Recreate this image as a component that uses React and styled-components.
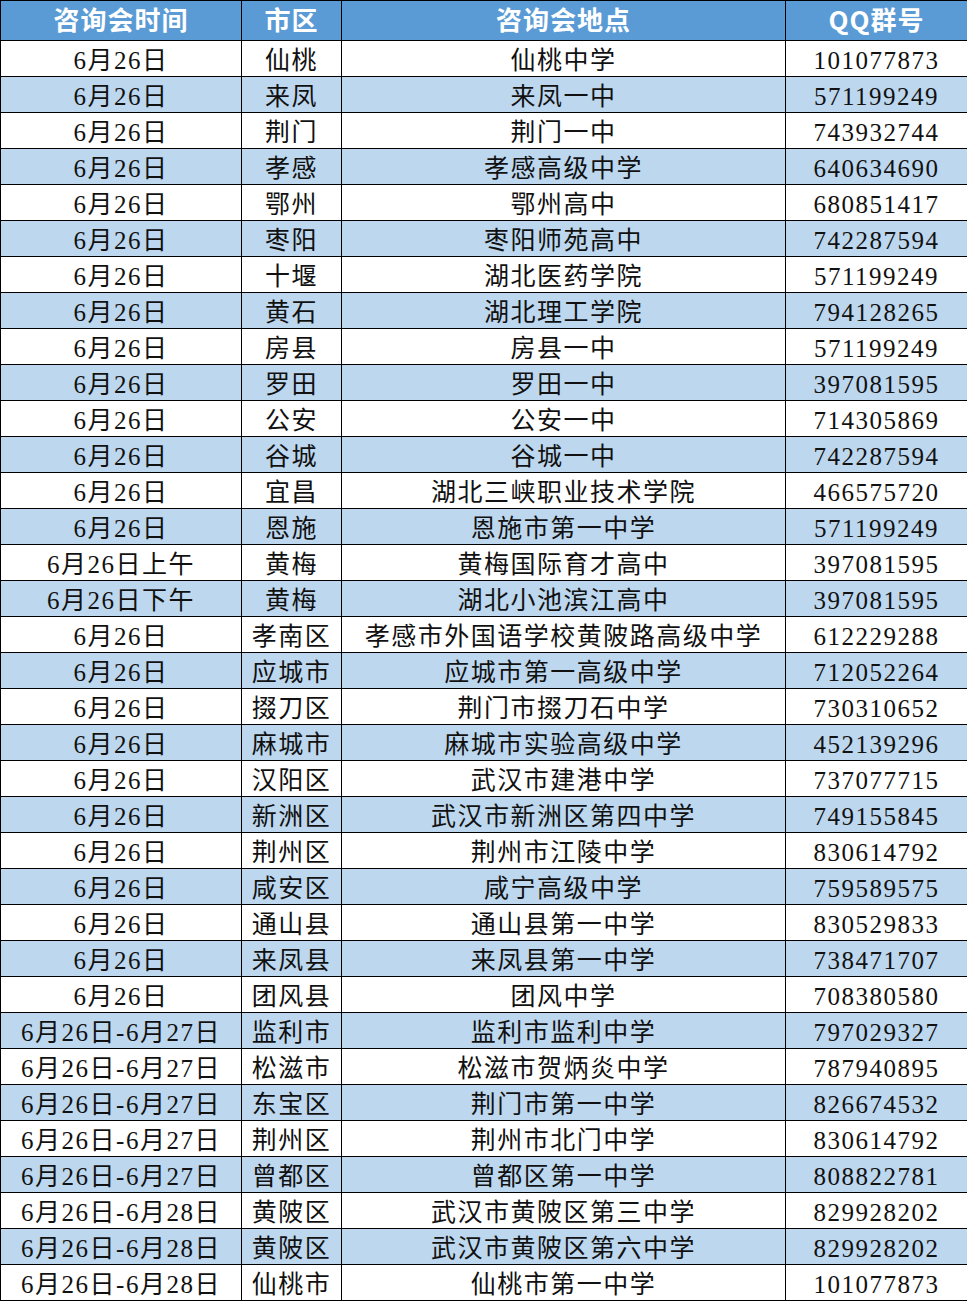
import React from 'react';
import styled, { createGlobalStyle } from 'styled-components';

const Global = createGlobalStyle`
  html, body { margin: 0; padding: 0; background: #fff; }
  body { font-family: "Liberation Serif", "Noto Sans CJK SC", serif; }
`;

const Table = styled.table`
  width: 967px; border-collapse: collapse; table-layout: fixed;
  border: 1px solid #000;
`;
const Col = styled.col`
  width: ${p => p.w}px;
`;
const Head = styled.th`
  height: 35px; padding: 0 0 4px; background: #5b9bd5; color: #fff;
  font-family: "Noto Sans CJK SC", "Noto Sans", sans-serif; font-weight: 700; font-size: 26px;
  letter-spacing: 1px; line-height: 1; border: 1px solid #000; text-align: center;
`;
const Row = styled.tr`
  height: 36px;
  background: ${p => p.alt ? '#bdd7ee' : '#fff'};
`;
const Cell = styled.td`
  padding: 3px 0 0; border: 1px solid #000; text-align: center; color: #111;
  font-size: 25px; letter-spacing: 1.5px; line-height: 1; white-space: nowrap;
`;

const rows = [
  ['6月26日', '仙桃', '仙桃中学', '101077873'],
  ['6月26日', '来凤', '来凤一中', '571199249'],
  ['6月26日', '荆门', '荆门一中', '743932744'],
  ['6月26日', '孝感', '孝感高级中学', '640634690'],
  ['6月26日', '鄂州', '鄂州高中', '680851417'],
  ['6月26日', '枣阳', '枣阳师苑高中', '742287594'],
  ['6月26日', '十堰', '湖北医药学院', '571199249'],
  ['6月26日', '黄石', '湖北理工学院', '794128265'],
  ['6月26日', '房县', '房县一中', '571199249'],
  ['6月26日', '罗田', '罗田一中', '397081595'],
  ['6月26日', '公安', '公安一中', '714305869'],
  ['6月26日', '谷城', '谷城一中', '742287594'],
  ['6月26日', '宜昌', '湖北三峡职业技术学院', '466575720'],
  ['6月26日', '恩施', '恩施市第一中学', '571199249'],
  ['6月26日上午', '黄梅', '黄梅国际育才高中', '397081595'],
  ['6月26日下午', '黄梅', '湖北小池滨江高中', '397081595'],
  ['6月26日', '孝南区', '孝感市外国语学校黄陂路高级中学', '612229288'],
  ['6月26日', '应城市', '应城市第一高级中学', '712052264'],
  ['6月26日', '掇刀区', '荆门市掇刀石中学', '730310652'],
  ['6月26日', '麻城市', '麻城市实验高级中学', '452139296'],
  ['6月26日', '汉阳区', '武汉市建港中学', '737077715'],
  ['6月26日', '新洲区', '武汉市新洲区第四中学', '749155845'],
  ['6月26日', '荆州区', '荆州市江陵中学', '830614792'],
  ['6月26日', '咸安区', '咸宁高级中学', '759589575'],
  ['6月26日', '通山县', '通山县第一中学', '830529833'],
  ['6月26日', '来凤县', '来凤县第一中学', '738471707'],
  ['6月26日', '团风县', '团风中学', '708380580'],
  ['6月26日-6月27日', '监利市', '监利市监利中学', '797029327'],
  ['6月26日-6月27日', '松滋市', '松滋市贺炳炎中学', '787940895'],
  ['6月26日-6月27日', '东宝区', '荆门市第一中学', '826674532'],
  ['6月26日-6月27日', '荆州区', '荆州市北门中学', '830614792'],
  ['6月26日-6月27日', '曾都区', '曾都区第一中学', '808822781'],
  ['6月26日-6月28日', '黄陂区', '武汉市黄陂区第三中学', '829928202'],
  ['6月26日-6月28日', '黄陂区', '武汉市黄陂区第六中学', '829928202'],
  ['6月26日-6月28日', '仙桃市', '仙桃市第一中学', '101077873'],
];

const headers = ['咨询会时间', '市区', '咨询会地点', 'QQ群号'];
const widths = [241, 100, 444, 182];

export default function App() {
  return (
    <>
      <Global />
      <Table>
        <colgroup>
          {widths.map((w, i) => <Col key={i} w={w} />)}
        </colgroup>
        <thead>
          <tr>
            {headers.map(h => <Head key={h}>{h}</Head>)}
          </tr>
        </thead>
        <tbody>
          {rows.map((r, i) => (
            <Row key={i} alt={i % 2 === 1}>
              {r.map((c, j) => <Cell key={j}>{c}</Cell>)}
            </Row>
          ))}
        </tbody>
      </Table>
    </>
  );
}
